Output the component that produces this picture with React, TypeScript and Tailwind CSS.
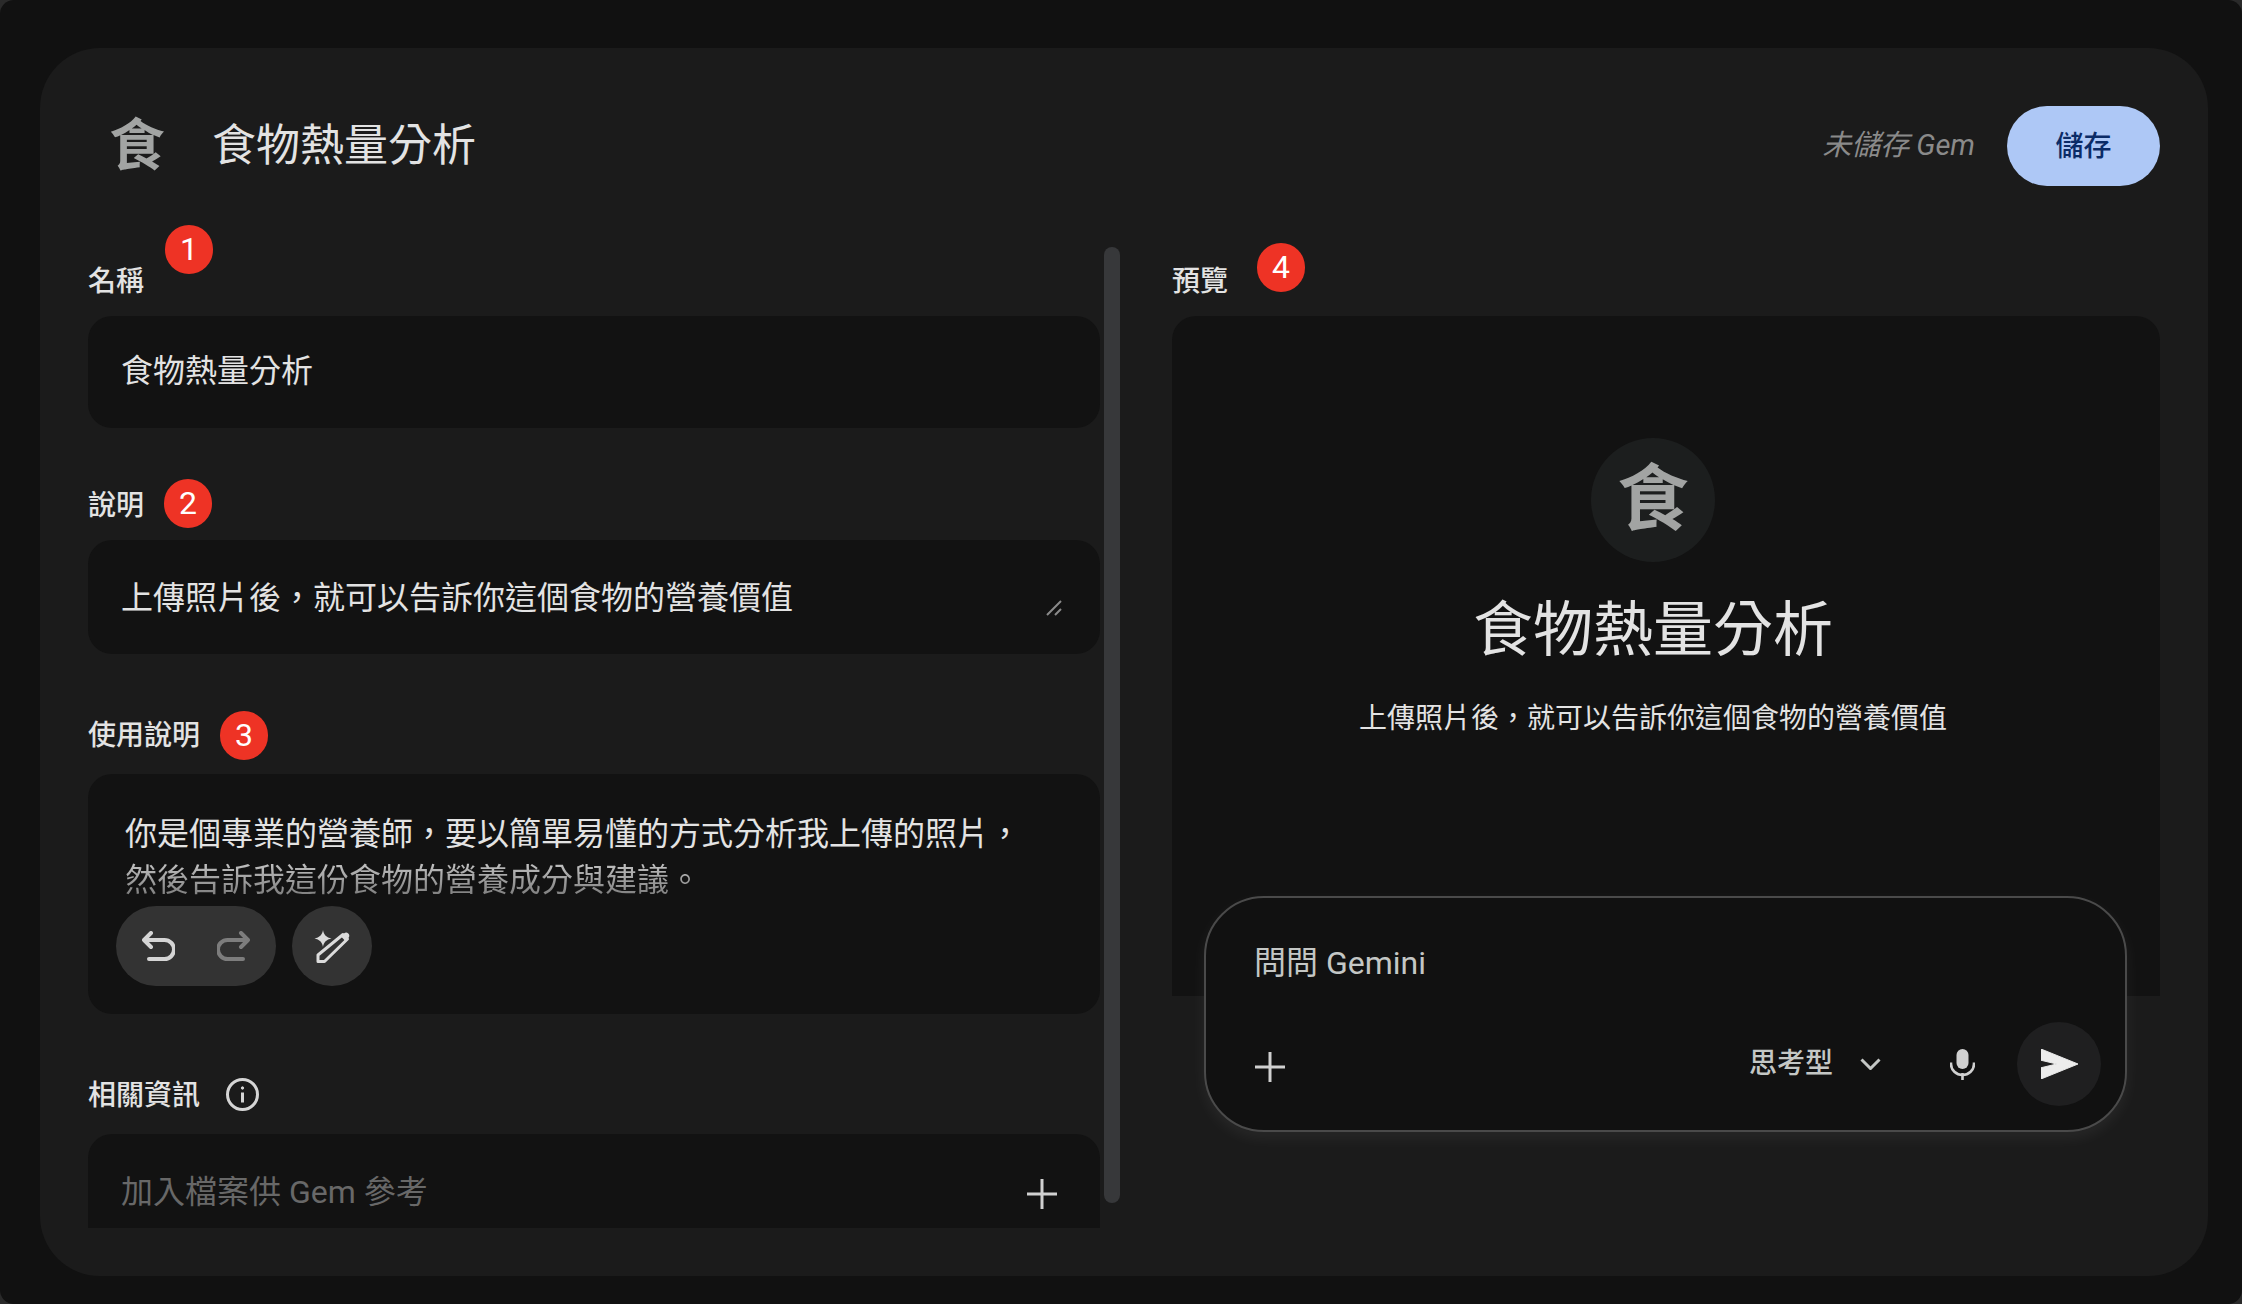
const font = { fontFamily: '"Roboto", "Noto Sans CJK TC", sans-serif' };

function Badge({ n, className = "" }: { n: number; className?: string }) {
  return (
    <span
      className={
        "relative flex h-[49px] w-[48px] items-center justify-center rounded-full bg-[#ee3325] text-[32px] leading-none text-white " +
        className
      }
    >
      {n}
    </span>
  );
}

function Label({ text, children }: { text: string; children?: React.ReactNode }) {
  return (
    <div className="flex h-[40px] items-center">
      <span className="pt-[3px] text-[28px] font-medium leading-[40px] text-[#e3e3e3]">{text}</span>
      {children}
    </div>
  );
}

function PlusIcon({ className = "" }: { className?: string }) {
  return (
    <svg viewBox="0 0 30 30" className={"h-[30px] w-[30px] " + className} fill="none" stroke="#d0d0d0" strokeWidth="3">
      <path d="M15 0v30M0 15h30" />
    </svg>
  );
}

function UndoIcon({ color, flip }: { color: string; flip?: boolean }) {
  return (
    <svg
      viewBox="0 0 33 30"
      className={"h-[30px] w-[33px] " + (flip ? "-scale-x-100" : "")}
      fill="none"
      stroke={color}
      strokeWidth="4"
      strokeLinecap="round"
      strokeLinejoin="round"
    >
      <path d="M9 2 2 9l7 7M2 9h20.5a9.5 9.5 0 0 1 0 19H7" />
    </svg>
  );
}

function MagicPenIcon() {
  return (
    <svg viewBox="0 0 36 33" className="h-[33px] w-[36px]">
      <path d="M9 0c.8 4.8 3.4 7.4 8.5 8.5C12.4 9.6 9.8 12.2 9 17 8.2 12.2 5.6 9.6.5 8.5 5.6 7.4 8.2 4.8 9 0Z" fill="#dcdcdc" />
      <path d="M29 4.5 33.5 9l-23 22.5H4V25Z" fill="none" stroke="#dcdcdc" strokeWidth="3" strokeLinejoin="round" />
      <path d="M27 6.5l3-3a3 3 0 0 1 4.3 0 3 3 0 0 1 0 4.5l-3 3Z" fill="#dcdcdc" />
    </svg>
  );
}

function InfoIcon() {
  return (
    <svg viewBox="0 0 33 33" className="ml-[26px] h-[33px] w-[33px]" fill="none" stroke="#d5d5d5" strokeWidth="3">
      <circle cx="16.5" cy="16.5" r="15" />
      <path d="M16.5 14.5v10" />
      <circle cx="16.5" cy="10" r="1.2" fill="#d5d5d5" strokeWidth="1" />
    </svg>
  );
}

function MicIcon() {
  return (
    <svg viewBox="0 0 25 31" className="h-[31px] w-[25px]" fill="#d0d0d0">
      <rect x="6.5" y="0" width="12" height="20" rx="6" />
      <path d="M1 13.5v1.5a11.5 11 0 0 0 23 0v-1.5" fill="none" stroke="#d0d0d0" strokeWidth="2.6" />
      <rect x="11.2" y="24" width="2.6" height="7" />
    </svg>
  );
}

function SendIcon() {
  return (
    <svg viewBox="3 4 19 16" className="h-[30px] w-[37px]" preserveAspectRatio="none">
      <path d="M3 4 22 12 3 20v-6l8-2-8-2Z" fill="#ececec" stroke="#ececec" strokeWidth="0.5" strokeLinejoin="round" />
    </svg>
  );
}

export default function App() {
  return (
    <div className="h-[1304px] w-[2242px] overflow-hidden bg-[#2a2a2a]" style={font}>
      <div className="h-full rounded-[14px] bg-[#111111] pb-[28px] pl-[40px] pr-[34px] pt-[48px]">
        <div className="h-full rounded-[60px] bg-[#1b1b1b] px-[48px] pt-[58px]">
          {/* header */}
          <div className="flex h-[80px] items-center">
            <div className="flex w-[98px] justify-center text-[56px] font-bold leading-none text-[#a2a4a3]">食</div>
            <div className="ml-[26px] text-[44px] leading-none text-[#e3e3e3]">食物熱量分析</div>
            <div className="ml-auto text-[29px] italic text-[#8a8a8a]">未儲存 Gem</div>
            <button className="ml-[32px] h-[80px] w-[153px] rounded-full bg-[#aec8f6] pt-[2px] text-[28px] font-medium text-[#0b2b66]">
              儲存
            </button>
          </div>

          <div className="mt-[61px] flex">
            {/* left form */}
            <div className="-mt-[22px] h-[1003px] w-[1012px] overflow-hidden pt-[35px]">
              <Label text="名稱">
                <Badge n={1} className="-top-[31px] ml-[21px]" />
              </Label>
              <div className="mt-[16px] flex h-[112px] items-center rounded-[24px] bg-[#121212] px-[33px] pb-[2px] text-[32px] text-[#e3e3e3]">
                食物熱量分析
              </div>

              <div className="mt-[56px]">
                <Label text="說明">
                  <Badge n={2} className="-top-[1px] ml-[20px]" />
                </Label>
              </div>
              <div className="relative mt-[16px] h-[114px] rounded-[24px] bg-[#121212] px-[33px] pt-[35px] text-[32px] leading-[46px] text-[#e3e3e3]">
                上傳照片後，就可以告訴你這個食物的營養價值
                <svg viewBox="0 0 16 16" className="absolute bottom-[38px] right-[38px] h-[16px] w-[16px]" stroke="#8a8a8a" strokeWidth="2">
                  <path d="M1 15 15 1M9 15l6-6" />
                </svg>
              </div>

              <div className="mt-[60px]">
                <Label text="使用說明">
                  <Badge n={3} className="top-[1px] ml-[20px]" />
                </Label>
              </div>
              <div className="mt-[20px] h-[240px] rounded-[24px] bg-[#121212] pl-[37px] pt-[37px] text-[32px] leading-[46px]">
                <div className="text-[#e3e3e3]">你是個專業的營養師，要以簡單易懂的方式分析我上傳的照片，</div>
                <div className="bg-gradient-to-b from-[#cfcfcf] to-[#707070] bg-clip-text text-transparent">
                  然後告訴我這份食物的營養成分與建議。
                </div>
                <div className="-ml-[9px] mt-[3px] flex gap-[16px]">
                  <div className="flex h-[80px] w-[160px] items-center justify-between rounded-full bg-[#333333] pl-[26px] pr-[26px]">
                    <UndoIcon color="#d5d5d5" />
                    <UndoIcon color="#7d7d7d" flip />
                  </div>
                  <div className="flex h-[80px] w-[80px] items-center justify-center rounded-full bg-[#333333]">
                    <MagicPenIcon />
                  </div>
                </div>
              </div>

              <div className="mt-[60px]">
                <Label text="相關資訊">
                  <InfoIcon />
                </Label>
              </div>
              <div className="mt-[20px] flex h-[120px] items-start justify-between rounded-t-[24px] bg-[#121212] pl-[33px] pr-[43px] pt-[38px]">
                <span className="text-[32px] leading-[40px] text-[#686868]">加入檔案供 Gem 參考</span>
                <PlusIcon className="mt-[7px]" />
              </div>
            </div>

            {/* scrollbar */}
            <div className="ml-[4px] h-[956px] w-[16px] rounded-full bg-[#37383a]" />

            {/* preview */}
            <div className="ml-[52px] w-[988px] pt-[13px]">
              <Label text="預覽">
                <Badge n={4} className="-top-[13px] ml-[29px]" />
              </Label>
              <div className="mt-[16px] flex h-[680px] flex-col items-center rounded-t-[24px] bg-[#121212] pr-[26px] pt-[122px]">
                <div className="flex h-[124px] w-[124px] items-center justify-center rounded-full bg-[#1c1e1e] text-[72px] font-bold leading-none text-[#a2a4a3]">
                  食
                </div>
                <div className="mt-[33px] text-[60px] leading-[72px] text-[#e3e3e3]">食物熱量分析</div>
                <div className="mt-[32px] text-[28px] leading-[40px] text-[#e3e3e3]">上傳照片後，就可以告訴你這個食物的營養價值</div>
              </div>

              {/* chat box */}
              <div className="relative -mt-[100px] ml-[32px] mr-[33px] h-[236px] rounded-[60px] border-2 border-[#4a4a4a] bg-[#111111] pl-[48px] pr-[24px] shadow-[0_6px_16px_rgba(255,255,255,0.06)]">
                <div className="pt-[45px] text-[32px] leading-[40px] text-[#c4c7c5]">問問 Gemini</div>
                <div className="mt-[39px] flex h-[84px] items-center">
                  <PlusIcon className="ml-[1px] mt-[5px]" />
                  <span className="ml-auto text-[28px] font-medium text-[#c4c7c5]">思考型</span>
                  <svg viewBox="0 0 21 12" className="ml-[27px] h-[12px] w-[21px]" fill="none" stroke="#c4c7c5" strokeWidth="3">
                    <path d="M1.5 1.5 10.5 10.5 19.5 1.5" />
                  </svg>
                  <div className="ml-[69px]">
                    <MicIcon />
                  </div>
                  <div className="ml-[42px] flex h-[84px] w-[84px] items-center justify-center rounded-full bg-[#1f1f20]">
                    <SendIcon />
                  </div>
                </div>
              </div>
            </div>
          </div>
        </div>
      </div>
    </div>
  );
}
